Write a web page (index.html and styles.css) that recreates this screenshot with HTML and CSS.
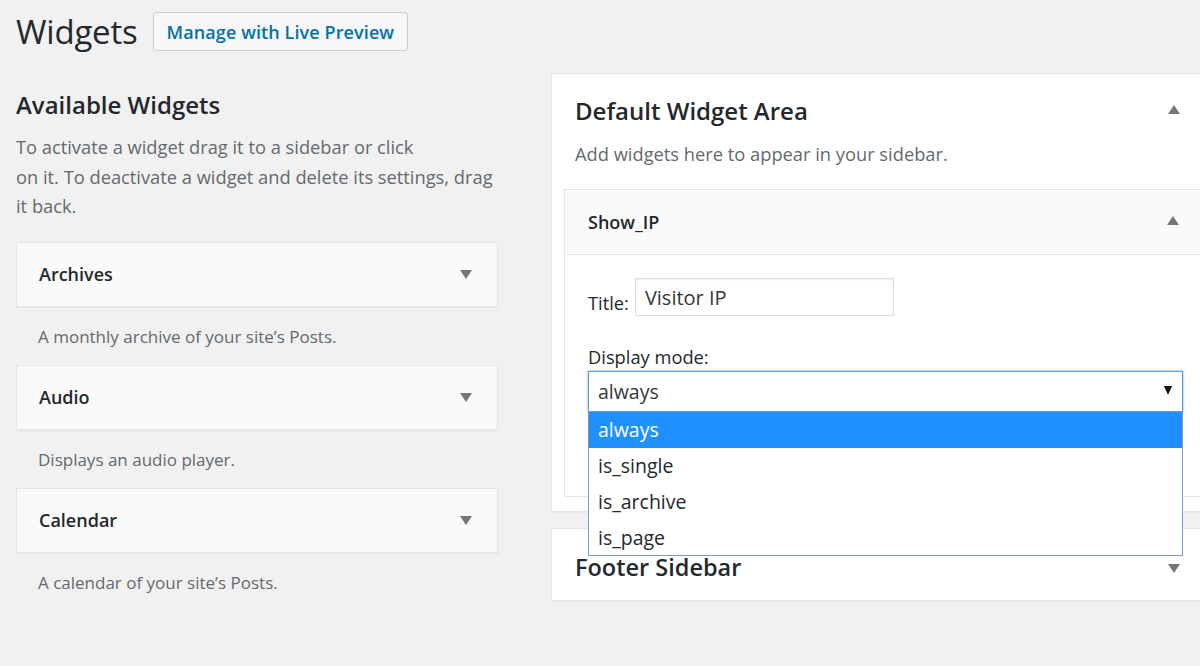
FILE: index.html
```html
<!DOCTYPE html>
<html lang="en">
<head>
<meta charset="utf-8">
<title>Widgets</title>
<link rel="stylesheet" href="styles.css">
</head>
<body>
<div class="wrap">
  <header class="page-head">
    <h1 class="page-title">Widgets</h1>
    <a class="title-action" href="#">Manage with Live Preview</a>
  </header>

  <div class="columns">
    <section class="available">
      <h2 class="avail-title">Available Widgets</h2>
      <p class="avail-desc">To activate a widget drag it to a sidebar or click<br>on it. To deactivate a widget and delete its settings, drag it back.</p>

      <div class="widget">
        <div class="widget-top"><span class="widget-name">Archives</span><span class="tri tri-down"></span></div>
        <p class="widget-desc">A monthly archive of your site’s Posts.</p>
      </div>
      <div class="widget">
        <div class="widget-top"><span class="widget-name">Audio</span><span class="tri tri-down"></span></div>
        <p class="widget-desc">Displays an audio player.</p>
      </div>
      <div class="widget">
        <div class="widget-top"><span class="widget-name">Calendar</span><span class="tri tri-down"></span></div>
        <p class="widget-desc">A calendar of your site’s Posts.</p>
      </div>
    </section>

    <section class="sidebars">
      <div class="sidebar-panel">
        <div class="sidebar-head">
          <h2 class="sidebar-title">Default Widget Area</h2>
          <span class="tri tri-up"></span>
        </div>
        <p class="sidebar-desc">Add widgets here to appear in your sidebar.</p>

        <div class="open-widget">
          <div class="open-top">
            <span class="widget-name">Show_IP</span>
            <span class="tri tri-up"></span>
          </div>
          <div class="open-form">
            <div class="field-row">
              <label class="lbl">Title:</label>
              <span class="text-input">Visitor IP</span>
            </div>
            <div class="lbl lbl-block">Display mode:</div>
            <div class="select-wrap">
              <div class="select-box">
                <span>always</span>
                <span class="sel-arrow"></span>
              </div>
              <ul class="dropdown">
                <li class="opt opt-active">always</li>
                <li class="opt">is_single</li>
                <li class="opt">is_archive</li>
                <li class="opt">is_page</li>
              </ul>
            </div>
          </div>
        </div>
      </div>

      <div class="sidebar-panel footer-panel">
        <div class="sidebar-head">
          <h2 class="sidebar-title">Footer Sidebar</h2>
          <span class="tri tri-down"></span>
        </div>
      </div>
    </section>
  </div>
</div>
</body>
</html>
```

FILE: styles.css
```css
* { box-sizing: border-box; }
html, body { margin: 0; padding: 0; }
body {
  background: #f1f1f1;
  font-family: "Open Sans", "Noto Sans", sans-serif;
  color: #23282d;
  overflow: hidden;
  width: 1200px;
  height: 666px;
}
.wrap { padding: 12px 0 0 16px; }

.page-head {
  display: flex;
  align-items: center;
  gap: 15px;
  height: 39px;
}
.page-title {
  margin: 0;
  font-size: 33px;
  font-weight: 400;
  line-height: 39px;
  color: #23282d;
  letter-spacing: -0.2px;
}
.title-action {
  display: flex;
  align-items: center;
  height: 39px;
  padding: 0 13px;
  border: 1px solid #cccccc;
  border-radius: 3px;
  background: #f7f7f7;
  color: #0073aa;
  font-size: 18px;
  font-weight: 600;
  text-decoration: none;
  letter-spacing: 0.1px;
}

.columns {
  display: flex;
  gap: 53px;
  margin-top: 36px;
}
.available { width: 482px; flex: none; padding-top: 2px; }
.avail-title {
  margin: 0;
  font-size: 24px;
  font-weight: 600;
  line-height: 32px;
}
.avail-desc {
  margin: 11px 0 21px;
  font-size: 18.3px;
  line-height: 29.5px;
  color: #646970;
}

.widget-top {
  display: flex;
  align-items: center;
  justify-content: space-between;
  height: 65px;
  padding: 0 25px 0 22px;
  background: #fafafa;
  border: 1px solid #e5e5e5;
  box-shadow: 0 1px 1px rgba(0,0,0,0.04);
}
.widget-name {
  font-size: 18px;
  font-weight: 600;
  color: #23282d;
}
.widget-desc {
  margin: 0;
  padding: 17px 0 15px 22px;
  font-size: 17px;
  line-height: 26px;
  color: #646970;
}

.tri {
  display: block;
  width: 0;
  height: 0;
  border-left: 6px solid transparent;
  border-right: 6px solid transparent;
}
.tri-down { border-top: 9px solid #72777c; }
.tri-up { border-bottom: 9px solid #72777c; }

.sidebars { width: 700px; flex: none; margin-top: -14px; }
.sidebar-panel {
  background: #fff;
  border: 1px solid #e5e5e5;
  box-shadow: 0 1px 1px rgba(0,0,0,0.04);
  padding: 0 13px 14px 12px;
}
.sidebar-head {
  display: flex;
  align-items: center;
  justify-content: space-between;
  padding: 21px 57px 0 11px;
}
.sidebar-title {
  margin: 0;
  font-size: 24px;
  font-weight: 600;
  line-height: 32px;
  color: #23282d;
}
.sidebar-head .tri { margin-top: -4px; }
.sidebar-desc {
  margin: 14px 0 22px 11px;
  font-size: 18.3px;
  line-height: 26px;
  color: #646970;
}

.open-widget {
  border: 1px solid #e5e5e5;
  background: #fff;
}
.open-top {
  display: flex;
  align-items: center;
  justify-content: space-between;
  height: 65px;
  padding: 0 57px 0 23px;
  background: #fafafa;
  border-bottom: 1px solid #e5e5e5;
}
.open-top .tri { margin-top: -4px; }
.open-form {
  height: 241px;
  padding: 23px 0 0 23px;
}
.field-row {
  display: flex;
  align-items: flex-end;
  gap: 6px;
}
.lbl {
  font-size: 18.3px;
  line-height: 24px;
  color: #23282d;
}
.field-row .lbl { padding-bottom: 1px; }
.text-input {
  display: flex;
  align-items: center;
  width: 259px;
  height: 38px;
  padding: 0 9px;
  border: 1px solid #dddddd;
  box-shadow: inset 0 1px 2px rgba(0,0,0,0.07);
  font-size: 20px;
  color: #32373c;
}
.lbl-block { margin-top: 29px; }
.select-wrap {
  position: relative;
  width: 595px;
  margin-top: 2px;
}
.select-box {
  display: flex;
  align-items: center;
  justify-content: space-between;
  height: 41px;
  padding: 0 10px 0 9px;
  border: 1px solid #5b9dd9;
  box-shadow: 0 0 2px rgba(30,140,190,0.8);
  background: #fff;
  font-size: 19.5px;
  color: #32373c;
}
.sel-arrow {
  width: 0;
  height: 0;
  border-left: 4px solid transparent;
  border-right: 4px solid transparent;
  border-top: 9px solid #111;
  margin-bottom: 2px;
}
.dropdown {
  position: absolute;
  top: 41px;
  left: 0;
  width: 595px;
  margin: 0;
  padding: 0;
  list-style: none;
  background: #fff;
  border: 1px solid #7a9cc6;
  border-top: none;
  z-index: 5;
}
.opt {
  height: 36px;
  line-height: 36px;
  padding: 0 9px;
  font-size: 19.5px;
  color: #23282d;
}
.opt:last-child { height: 35px; }
.opt-active {
  background: #1e90ff;
  color: #fff;
}

.footer-panel {
  margin-top: 16px;
  height: 73px;
  padding-bottom: 0;
}
.footer-panel .sidebar-head { padding-top: 22px; }
.footer-panel .sidebar-title { font-size: 23.5px; }
.footer-panel .tri { margin-top: 2px; }
```
